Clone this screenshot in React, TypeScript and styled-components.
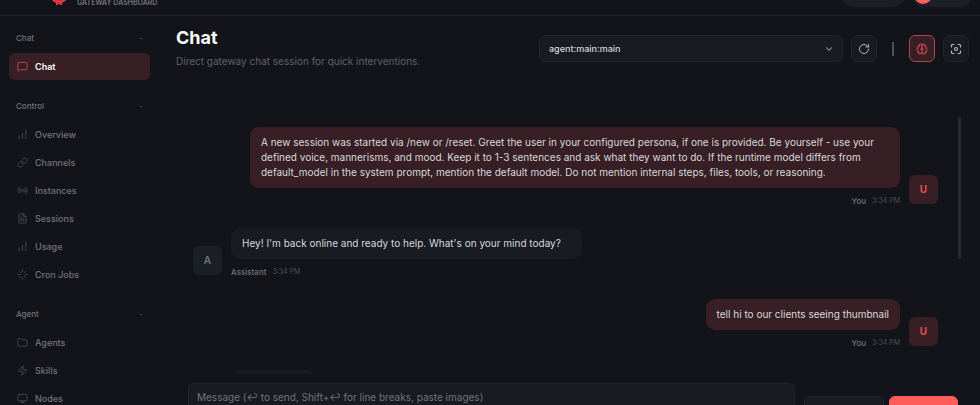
import React from 'react';
import styled, { createGlobalStyle, css } from 'styled-components';
import {
  ChartNoAxesColumnIncreasing,
  ChevronDown,
  FileText,
  Folder,
  Link as LinkIcon,
  Loader,
  MessageSquare,
  Monitor,
  Radio,
  RotateCw,
  Zap,
  Brain,
  type LucideIcon,
} from 'lucide-react';

const color = {
  bg: '#121419',
  card: '#181b22',
  raised: '#1b1f26',
  border: '#22252b',
  text: '#d9d9dc',
  strong: '#fafafa',
  muted: '#72737b',
  dim: '#4d4f57',
  accent: '#ff5c5c',
  accentSoft: '#371f25',
};

const GlobalStyle = createGlobalStyle`
  *, *::before, *::after { box-sizing: border-box; }
  body {
    margin: 0;
    background: ${color.bg};
    color: ${color.text};
    font-family: Inter, "Liberation Sans", sans-serif;
    font-size: 10px;
    line-height: 15px;
  }
  button, select, textarea { font: inherit; color: inherit; }
`;

const Shell = styled.div`
  display: flex;
  flex-direction: column;
  height: 100vh;
  overflow: hidden;
`;

const TopBar = styled.header`
  display: flex;
  flex: none;
  align-items: flex-end;
  justify-content: space-between;
  height: 56px;
  margin-top: -40px;
  padding: 0 8px 8px 46px;
  border-bottom: 1px solid ${color.border};
`;

const Brand = styled.div`
  display: flex;
  align-items: flex-end;
  gap: 5px;
  color: ${color.muted};
  font-size: 7px;
  font-weight: 600;
  line-height: 8px;
  text-transform: uppercase;
`;

const Logo = styled.svg`
  width: 26px;
  height: 26px;
`;

const TopActions = styled.div`
  display: flex;
  gap: 7px;
`;

const Pill = styled.div<{ $width: number }>`
  display: flex;
  align-items: center;
  width: ${(p) => p.$width}px;
  height: 24px;
  padding: 0 2px;
  border-radius: 12px;
  background: ${color.raised};
`;

const ThemeKnob = styled.span`
  width: 18px;
  height: 18px;
  border-radius: 50%;
  background: ${color.accent};
`;

const Body = styled.div`
  display: grid;
  flex: 1;
  grid-template-rows: minmax(0, 1fr);
  grid-template-columns: 160px minmax(0, 1fr);
  min-height: 0;
`;

const Sidebar = styled.nav`
  display: flex;
  flex-direction: column;
  gap: 16px;
  padding: 12px 10px 0 9px;
`;

const NavGroup = styled.section`
  display: flex;
  flex-direction: column;
  gap: 1px;
`;

const GroupLabel = styled.button`
  display: flex;
  align-items: center;
  justify-content: space-between;
  height: 20px;
  margin-bottom: 4px;
  padding: 0 7px;
  border: 0;
  background: none;
  color: ${color.muted};
  font-size: 8px;
  font-weight: 500;
`;

const Collapse = styled.span`
  color: ${color.dim};
`;

const NavLink = styled.a<{ $active?: boolean }>`
  display: flex;
  align-items: center;
  gap: 7px;
  height: 27px;
  padding: 0 8px;
  border-radius: 6px;
  color: ${color.muted};
  font-size: 9px;
  font-weight: 500;
  text-decoration: none;

  svg {
    width: 11px;
    height: 11px;
    color: #484a51;
  }

  ${(p) =>
    p.$active &&
    css`
      background: ${color.accentSoft};
      color: ${color.strong};
      font-weight: 600;
      svg { color: #c84a4d; }
    `}
`;

const Main = styled.main`
  display: flex;
  flex-direction: column;
  min-height: 0;
  margin-bottom: -34px;
  padding: 11px 11px 0 16px;
`;

const PageHead = styled.div`
  display: flex;
  align-items: flex-start;
  justify-content: space-between;
`;

const Title = styled.h1`
  margin: 0;
  color: ${color.strong};
  font-size: 18px;
  font-weight: 700;
  line-height: 22px;
`;

const Subtitle = styled.p`
  margin: 5px 0 0;
  color: #5f6169;
`;

const Controls = styled.div`
  display: flex;
  align-items: center;
  gap: 8px;
  padding-top: 8px;
`;

const SelectWrap = styled.div`
  display: grid;
  align-items: center;
  width: 304px;

  > * { grid-area: 1 / 1; }

  svg {
    justify-self: end;
    width: 10px;
    height: 10px;
    margin-right: 9px;
    color: #a0a0a6;
    pointer-events: none;
  }
`;

const SessionSelect = styled.select`
  appearance: none;
  height: 27px;
  padding: 0 24px 0 9px;
  border: 1px solid ${color.border};
  border-radius: 6px;
  background: ${color.card};
  font-size: 9px;
  font-weight: 500;
`;

const IconButton = styled.button<{ $active?: boolean }>`
  display: grid;
  place-items: center;
  width: 26px;
  height: 27px;
  padding: 0;
  border: 1px solid ${(p) => (p.$active ? '#b04448' : color.border)};
  border-radius: 6px;
  background: ${(p) => (p.$active ? color.accentSoft : color.card)};
  color: ${(p) => (p.$active ? '#e05054' : '#b4b4ba')};

  svg {
    width: 12px;
    height: 12px;
  }
`;

const Divider = styled.span`
  width: 2px;
  height: 14px;
  margin: 0 7px;
  background: #4a5259;
`;

const Thread = styled.section`
  display: flex;
  flex: 1;
  justify-content: space-between;
  min-height: 0;
  margin-top: 47px;
  padding: 0 8px 0 17px;
  overflow: hidden;
`;

const Messages = styled.ol`
  display: flex;
  flex: 1;
  flex-direction: column;
  gap: 21px;
  min-width: 0;
  margin: 0;
  padding: 11px 20px 0 0;
  list-style: none;
`;

const ScrollThumb = styled.span`
  flex: none;
  width: 3px;
  height: 143px;
  border-radius: 2px;
  background: #26292f;
`;

const Message = styled.li<{ $mine?: boolean }>`
  display: flex;
  flex: none;
  flex-direction: ${(p) => (p.$mine ? 'row-reverse' : 'row')};
  align-items: flex-end;
  gap: 9px;
`;

const Avatar = styled.span<{ $mine?: boolean }>`
  display: grid;
  flex: none;
  place-items: center;
  width: 29px;
  height: 29px;
  margin-bottom: 3px;
  border-radius: 6px;
  background: ${(p) => (p.$mine ? color.accentSoft : color.raised)};
  color: ${(p) => (p.$mine ? '#e05054' : color.muted)};
  font-weight: ${(p) => (p.$mine ? 700 : 600)};
`;

const MessageBody = styled.div<{ $mine?: boolean }>`
  display: flex;
  flex-direction: column;
  align-items: ${(p) => (p.$mine ? 'flex-end' : 'flex-start')};
  gap: 7px;
  max-width: 650px;
`;

const Bubble = styled.p<{ $mine?: boolean }>`
  min-width: 84px;
  min-height: 31px;
  margin: 0;
  padding: ${(p) => (p.$mine ? '8px 11px' : '8px 21px 8px 11px')};
  border-radius: 9px;
  background: ${(p) => (p.$mine ? color.accentSoft : color.card)};
`;

const Meta = styled.div`
  display: flex;
  gap: 6px;
  min-height: 12px;
  color: ${color.dim};
  font-size: 7px;
  line-height: 12px;
`;

const Sender = styled.span`
  color: ${color.muted};
  font-size: 8px;
  font-weight: 500;
`;

const Composer = styled.form`
  display: flex;
  flex: none;
  align-items: flex-end;
  padding: 9px 11px 0 12px;
`;

const MessageInput = styled.textarea`
  flex: 1;
  height: 56px;
  margin-right: 9px;
  padding: 6px 8px;
  border: 1px solid ${color.border};
  border-radius: 6px;
  background: ${color.card};
  resize: none;

  &::placeholder { color: ${color.muted}; }
`;

const ComposerButton = styled.button<{ $primary?: boolean }>`
  width: ${(p) => (p.$primary ? 69 : 80)}px;
  height: 43px;
  margin-left: ${(p) => (p.$primary ? 5 : 0)}px;
  border: 1px solid ${(p) => (p.$primary ? color.accent : color.border)};
  border-radius: 6px;
  background: ${(p) => (p.$primary ? color.accent : color.card)};
`;

const FocusIcon = () => (
  <svg viewBox="0 0 24 24" fill="none" stroke="currentColor" strokeWidth="2.4" strokeLinecap="round" strokeLinejoin="round" aria-hidden="true">
    <path d="M3 8V5a2 2 0 0 1 2-2h3M16 3h3a2 2 0 0 1 2 2v3M21 16v3a2 2 0 0 1-2 2h-3M8 21H5a2 2 0 0 1-2-2v-3" />
    <circle cx="12" cy="12" r="3" />
  </svg>
);

type NavItem = { label: string; icon: LucideIcon; active?: boolean };

const groups: { label: string; items: NavItem[] }[] = [
  { label: 'Chat', items: [{ label: 'Chat', icon: MessageSquare, active: true }] },
  {
    label: 'Control',
    items: [
      { label: 'Overview', icon: ChartNoAxesColumnIncreasing },
      { label: 'Channels', icon: LinkIcon },
      { label: 'Instances', icon: Radio },
      { label: 'Sessions', icon: FileText },
      { label: 'Usage', icon: ChartNoAxesColumnIncreasing },
      { label: 'Cron Jobs', icon: Loader },
    ],
  },
  {
    label: 'Agent',
    items: [
      { label: 'Agents', icon: Folder },
      { label: 'Skills', icon: Zap },
      { label: 'Nodes', icon: Monitor },
    ],
  },
];

const messages = [
  {
    mine: true,
    text: 'A new session was started via /new or /reset. Greet the user in your configured persona, if one is provided. Be yourself - use your defined voice, mannerisms, and mood. Keep it to 1-3 sentences and ask what they want to do. If the runtime model differs from default_model in the system prompt, mention the default model. Do not mention internal steps, files, tools, or reasoning.',
  },
  { mine: false, text: "Hey! I'm back online and ready to help. What's on your mind today?" },
  { mine: true, text: 'tell hi to our clients seeing thumbnail' },
];

export default function App() {
  return (
    <>
      <GlobalStyle />
      <Shell>
        <TopBar>
          <Brand>
            <Logo viewBox="0 0 26 26" fill="#d8383c" aria-hidden="true">
              <path d="M13 2C7 2 3 7 3 12c0 5 3 8 7 10v2h2v-1h2v1h2v-2c4-2 7-5 7-10 0-5-4-10-10-10z" />
            </Logo>
            Gateway Dashboard
          </Brand>
          <TopActions>
            <Pill $width={64} />
            <Pill $width={60}>
              <ThemeKnob />
            </Pill>
          </TopActions>
        </TopBar>
        <Body>
          <Sidebar aria-label="Main">
            {groups.map((group) => (
              <NavGroup key={group.label}>
                <GroupLabel type="button">
                  {group.label}
                  <Collapse>-</Collapse>
                </GroupLabel>
                {group.items.map(({ label, icon: Icon, active }) => (
                  <NavLink key={label} href={`#${label}`} $active={active}>
                    <Icon />
                    {label}
                  </NavLink>
                ))}
              </NavGroup>
            ))}
          </Sidebar>
          <Main>
            <PageHead>
              <div>
                <Title>Chat</Title>
                <Subtitle>Direct gateway chat session for quick interventions.</Subtitle>
              </div>
              <Controls>
                <SelectWrap>
                  <SessionSelect aria-label="Session">
                    <option>agent:main:main</option>
                  </SessionSelect>
                  <ChevronDown strokeWidth={2.5} />
                </SelectWrap>
                <IconButton type="button" aria-label="Refresh">
                  <RotateCw />
                </IconButton>
                <Divider />
                <IconButton type="button" aria-label="Toggle thinking" $active>
                  <Brain />
                </IconButton>
                <IconButton type="button" aria-label="Focus mode">
                  <FocusIcon />
                </IconButton>
              </Controls>
            </PageHead>
            <Thread>
              <Messages>
                {messages.map(({ mine, text }) => (
                  <Message key={text} $mine={mine}>
                    <Avatar $mine={mine}>{mine ? 'U' : 'A'}</Avatar>
                    <MessageBody $mine={mine}>
                      <Bubble $mine={mine}>{text}</Bubble>
                      <Meta>
                        <Sender>{mine ? 'You' : 'Assistant'}</Sender>
                        <span>3:34 PM</span>
                      </Meta>
                    </MessageBody>
                  </Message>
                ))}
                <Message>
                  <Avatar />
                  <MessageBody>
                    <Bubble />
                    <Meta />
                  </MessageBody>
                </Message>
              </Messages>
              <ScrollThumb />
            </Thread>
            <Composer>
              <MessageInput aria-label="Message" placeholder="Message (↩ to send, Shift+↩ for line breaks, paste images)" />
              <ComposerButton type="button" aria-label="New session" />
              <ComposerButton type="submit" aria-label="Send" $primary />
            </Composer>
          </Main>
        </Body>
      </Shell>
    </>
  );
}
